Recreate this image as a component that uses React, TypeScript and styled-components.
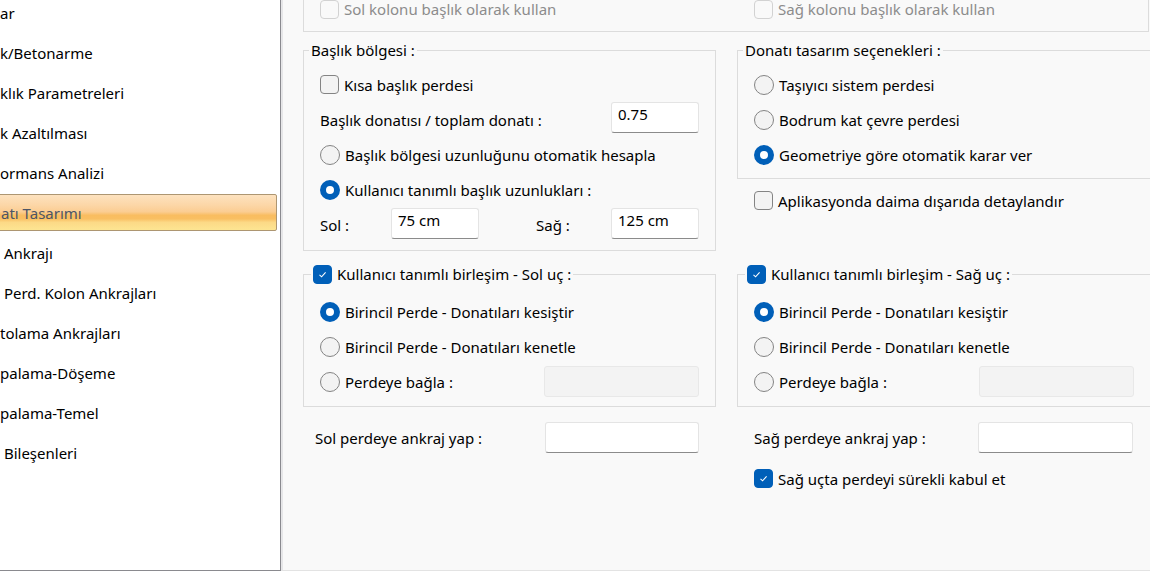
import React from "react";
import styled, { createGlobalStyle } from "styled-components";

const GlobalStyle = createGlobalStyle`
  html, body {
    margin: 0;
    padding: 0;
  }
  body {
    font-family: "Noto Sans", "Open Sans", sans-serif;
    font-size: 15px;
    line-height: 20px;
    color: #000;
    background: #f9f9f9;
    overflow: hidden;
  }
`;

const Shell = styled.div`
  display: flex;
  width: 1150px;
  height: 571px;
  overflow: hidden;
`;

const NavPanel = styled.div`
  width: 280px;
  height: 570px;
  flex-shrink: 0;
  background: #fff;
  border-right: 1px solid #8a8a8f;
  border-bottom: 1px solid #8a8a8f;
  overflow: hidden;
`;

const NavList = styled.ul`
  list-style: none;
  margin: -7px 0 0;
  padding: 0;
`;

const NavItem = styled.li<{ $active?: boolean }>`
  display: flex;
  align-items: center;
  white-space: pre;
  height: ${(p) => (p.$active ? "35px" : "40px")};
  ${(p) =>
    p.$active &&
    `
    margin: 1px 3px 2px -5px;
    padding-left: 5px;
    color: #4d5566;
    border: 1px solid #ad9672;
    border-radius: 2px;
    background: linear-gradient(
      to bottom,
      #fde2bf 0%,
      #fcd6a6 30%,
      #fbcd92 48%,
      #f9bd60 58%,
      #f9bf62 68%,
      #fcd986 78%,
      #fde592 100%
    );
  `}
`;

const Content = styled.div`
  flex: 1;
  height: 571px;
  box-sizing: border-box;
  background: #f9f9f9;
  border-left: 2px solid #e6e6e8;
  border-bottom: 1px solid #e3e3e3;
  padding-left: 20px;
  overflow: hidden;
`;

const TopBox = styled.div`
  display: grid;
  grid-template-columns: 413px 1fr;
  column-gap: 21px;
  width: 846px;
  box-sizing: border-box;
  margin-top: -1px;
  padding-bottom: 12px;
  border: 1px solid #dcdcdc;
  border-top: none;
`;

const TopCell = styled.div`
  display: flex;
  align-items: center;
  gap: 5px;
  height: 20px;
  padding-left: 16px;
`;

const MainGrid = styled.div`
  display: grid;
  grid-template-columns: 413px 414px;
  column-gap: 21px;
  row-gap: 13px;
  align-items: start;
  margin-top: 8px;
`;

const Stack = styled.div`
  display: flex;
  flex-direction: column;
`;

const GroupBox = styled.fieldset`
  margin: 0;
  padding: 0;
  min-width: 0;
  border: 1px solid #dcdcdc;
`;

const Legend = styled.legend<{ $inset: number }>`
  display: flex;
  align-items: center;
  gap: 5px;
  margin-left: ${(p) => p.$inset}px;
  padding: 0 2px;
  line-height: 20px;
`;

const GroupBody = styled.div<{ $top: number; $bottom: number }>`
  padding: ${(p) => p.$top}px 16px ${(p) => p.$bottom}px;
`;

const Row = styled.div<{ $left?: number; $right?: number; $gap?: number }>`
  display: flex;
  align-items: center;
  gap: 5px;
  height: 35px;
  padding-left: ${(p) => p.$left ?? 0}px;
  padding-right: ${(p) => p.$right ?? 0}px;
  margin-top: ${(p) => p.$gap ?? 0}px;
`;

const LengthRow = styled.div`
  display: grid;
  grid-template-columns: 71px 88px 57px 75px 88px;
  align-items: center;
  height: 35px;
`;

const Text = styled.span<{ $muted?: boolean }>`
  white-space: nowrap;
  color: ${(p) => (p.$muted ? "#8c8c8c" : "#000")};
`;

const TextBox = styled.div<{ $width: number; $disabled?: boolean; $lift?: number }>`
  width: ${(p) => p.$width}px;
  height: 31px;
  box-sizing: border-box;
  margin-left: auto;
  margin-bottom: ${(p) => (p.$lift ?? 0) * 2}px;
  padding: 0 6px;
  border-radius: 3px;
  line-height: 23px;
  background: ${(p) => (p.$disabled ? "#f3f3f3" : "#fff")};
  border: 1px solid ${(p) => (p.$disabled ? "#e8e8e8" : "#e4e4e4")};
  border-bottom-color: ${(p) => (p.$disabled ? "#e8e8e8" : "#8b8b8b")};
`;

const GridBox = styled(TextBox)`
  margin-left: 0;
`;

const CheckBox = styled.span<{ $checked?: boolean; $disabled?: boolean }>`
  display: inline-flex;
  align-items: center;
  justify-content: center;
  flex-shrink: 0;
  width: 19px;
  height: 19px;
  box-sizing: border-box;
  border-radius: 4px;
  border: 1px solid
    ${(p) => (p.$checked ? "#005fb8" : p.$disabled ? "#d2d2d2" : "#848484")};
  background: ${(p) =>
    p.$checked ? "#005fb8" : p.$disabled ? "#f9f9f9" : "#f3f3f3"};
`;

const RadioDot = styled.span<{ $checked?: boolean }>`
  flex-shrink: 0;
  width: 20px;
  height: 20px;
  box-sizing: border-box;
  border-radius: 50%;
  ${(p) =>
    p.$checked
      ? "border: 6px solid #005fb8; background: #fff;"
      : "border: 1px solid #848484; background: #f3f3f3;"}
`;

function Check({
  checked,
  disabled,
}: {
  checked?: boolean;
  disabled?: boolean;
}) {
  return (
    <CheckBox $checked={checked} $disabled={disabled}>
      {checked && (
        <svg width="11" height="11" viewBox="0 0 11 11">
          <polyline
            points="2.5,5.8 4.6,7.8 8.6,3.4"
            fill="none"
            stroke="#fff"
            strokeWidth="1.1"
          />
        </svg>
      )}
    </CheckBox>
  );
}

const navItems = [
  "ar",
  "k/Betonarme",
  "klık Parametreleri",
  "k Azaltılması",
  "ormans Analizi",
  "atı Tasarımı",
  " Ankrajı",
  " Perd. Kolon Ankrajları",
  "tolama Ankrajları",
  "palama-Döşeme",
  "palama-Temel",
  " Bileşenleri",
];

function JunctionBox({ side }: { side: string }) {
  return (
    <GroupBox>
      <Legend $inset={7}>
        <Check checked />
        <Text>Kullanıcı tanımlı birleşim - {side} uç :</Text>
      </Legend>
      <GroupBody $top={10} $bottom={7}>
        <Row>
          <RadioDot $checked />
          <Text>Birincil Perde - Donatıları kesiştir</Text>
        </Row>
        <Row>
          <RadioDot />
          <Text>Birincil Perde - Donatıları kenetle</Text>
        </Row>
        <Row>
          <RadioDot />
          <Text>Perdeye bağla :</Text>
          <TextBox $width={155} $disabled />
        </Row>
      </GroupBody>
    </GroupBox>
  );
}

export default function App() {
  return (
    <>
      <GlobalStyle />
      <Shell>
        <NavPanel>
          <NavList>
            {navItems.map((item) => (
              <NavItem key={item} $active={item === "atı Tasarımı"}>
                {item}
              </NavItem>
            ))}
          </NavList>
        </NavPanel>

        <Content>
          <TopBox>
            <TopCell>
              <Check disabled />
              <Text $muted>Sol kolonu başlık olarak kullan</Text>
            </TopCell>
            <TopCell>
              <Check disabled />
              <Text $muted>Sağ kolonu başlık olarak kullan</Text>
            </TopCell>
          </TopBox>

          <MainGrid>
            <GroupBox>
              <Legend $inset={5}>Başlık bölgesi :</Legend>
              <GroupBody $top={7} $bottom={8}>
                <Row>
                  <Check />
                  <Text>Kısa başlık perdesi</Text>
                </Row>
                <Row>
                  <Text>Başlık donatısı / toplam donatı :</Text>
                  <TextBox $width={88} $lift={2}>
                    0.75
                  </TextBox>
                </Row>
                <Row>
                  <RadioDot />
                  <Text>Başlık bölgesi uzunluğunu otomatik hesapla</Text>
                </Row>
                <Row>
                  <RadioDot $checked />
                  <Text>Kullanıcı tanımlı başlık uzunlukları :</Text>
                </Row>
                <LengthRow>
                  <Text>Sol :</Text>
                  <GridBox $width={88} $lift={1}>
                    75 cm
                  </GridBox>
                  <span />
                  <Text>Sağ :</Text>
                  <GridBox $width={88} $lift={1}>
                    125 cm
                  </GridBox>
                </LengthRow>
              </GroupBody>
            </GroupBox>

            <Stack>
              <GroupBox>
                <Legend $inset={5}>Donatı tasarım seçenekleri :</Legend>
                <GroupBody $top={7} $bottom={6}>
                  <Row>
                    <RadioDot />
                    <Text>Taşıyıcı sistem perdesi</Text>
                  </Row>
                  <Row>
                    <RadioDot />
                    <Text>Bodrum kat çevre perdesi</Text>
                  </Row>
                  <Row>
                    <RadioDot $checked />
                    <Text>Geometriye göre otomatik karar ver</Text>
                  </Row>
                </GroupBody>
              </GroupBox>
              <Row $left={17} $gap={4}>
                <Check />
                <Text>Aplikasyonda daima dışarıda detaylandır</Text>
              </Row>
            </Stack>

            <JunctionBox side="Sol" />
            <JunctionBox side="Sağ" />

            <Row $left={12} $right={17}>
              <Text>Sol perdeye ankraj yap :</Text>
              <TextBox $width={154} />
            </Row>

            <Stack>
              <Row $left={17} $right={18}>
                <Text>Sağ perdeye ankraj yap :</Text>
                <TextBox $width={155} />
              </Row>
              <Row $left={17} $gap={6}>
                <Check checked />
                <Text>Sağ uçta perdeyi sürekli kabul et</Text>
              </Row>
            </Stack>
          </MainGrid>
        </Content>
      </Shell>
    </>
  );
}
